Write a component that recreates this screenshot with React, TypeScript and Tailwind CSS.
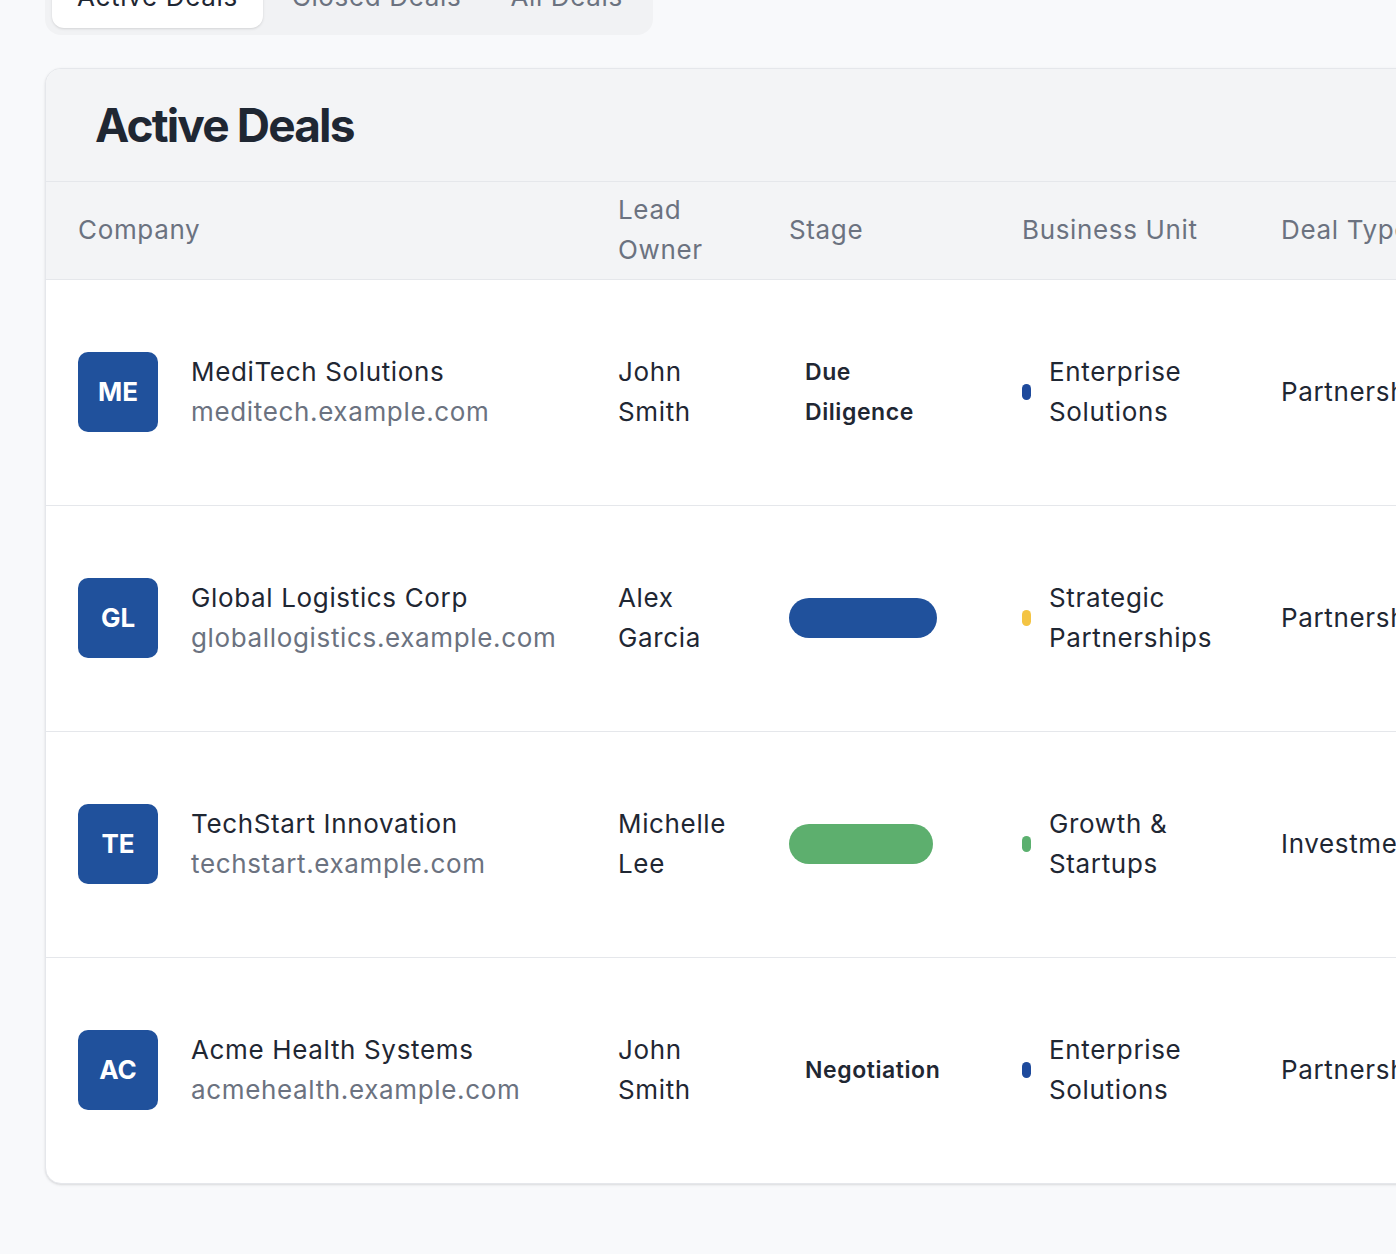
import React from "react";

type Deal = {
  initials: string;
  name: string;
  domain: string;
  owner: string;
  stage: string;
  stageStyle: "plain" | "blue" | "green";
  unit: string;
  dot: string;
  dealType: string;
};

const deals: Deal[] = [
  {
    initials: "ME",
    name: "MediTech Solutions",
    domain: "meditech.example.com",
    owner: "John Smith",
    stage: "Due Diligence",
    stageStyle: "plain",
    unit: "Enterprise Solutions",
    dot: "bg-[#1e4a9c]",
    dealType: "Partnership",
  },
  {
    initials: "GL",
    name: "Global Logistics Corp",
    domain: "globallogistics.example.com",
    owner: "Alex Garcia",
    stage: "Proposal",
    stageStyle: "blue",
    unit: "Strategic Partnerships",
    dot: "bg-[#f4c443]",
    dealType: "Partnership",
  },
  {
    initials: "TE",
    name: "TechStart Innovation",
    domain: "techstart.example.com",
    owner: "Michelle Lee",
    stage: "Discovery",
    stageStyle: "green",
    unit: "Growth & Startups",
    dot: "bg-[#5bb06f]",
    dealType: "Investment",
  },
  {
    initials: "AC",
    name: "Acme Health Systems",
    domain: "acmehealth.example.com",
    owner: "John Smith",
    stage: "Negotiation",
    stageStyle: "plain",
    unit: "Enterprise Solutions",
    dot: "bg-[#1e4a9c]",
    dealType: "Partnership",
  },
];

const StageBadge = ({ deal }: { deal: Deal }) => {
  if (deal.stageStyle === "blue")
    return (
      <span className="block w-[148px] overflow-hidden whitespace-nowrap rounded-full bg-[#20519c] px-4 text-[23px] font-semibold leading-[40px] text-[#20519c]">
        {deal.stage}
      </span>
    );
  if (deal.stageStyle === "green")
    return (
      <span className="block w-[144px] overflow-hidden whitespace-nowrap rounded-full bg-[#5daf6e] px-4 text-[23px] font-semibold leading-[40px] text-[#5daf6e]">
        {deal.stage}
      </span>
    );
  return (
    <span className="block max-w-[160px] px-4 text-[23px] font-semibold leading-[40px] tracking-[0.025em] text-[#1f2733]">
      {deal.stage}
    </span>
  );
};

export default function App() {
  return (
    <div className="min-h-[1254px] overflow-hidden bg-[#f8f9fb] font-['Inter',sans-serif] text-[#1f2733]">
      <div className="ml-[45px] mt-[-41px] flex w-[608px] gap-1 rounded-2xl bg-[#f1f2f4] p-[7px] text-[26px] leading-[40px] tracking-[0.025em]">
        <div className="rounded-xl bg-white px-[25px] py-[11px] shadow-sm">Active Deals</div>
        <div className="px-[25px] py-[11px] text-[#6b7280]">Closed Deals</div>
        <div className="px-[20px] py-[11px] text-[#6b7280]">All Deals</div>
      </div>

      <div className="ml-[45px] mt-[33px] w-[1500px] overflow-hidden rounded-2xl border border-[#e5e7eb] bg-white shadow-sm">
        <div className="flex h-[113px] items-center border-b border-[#e5e7eb] bg-[#f3f4f6] px-[49px]">
          <h2 className="text-[46px] font-bold tracking-[-0.04em] text-[#1f2733]">Active Deals</h2>
        </div>
        <table className="w-full table-fixed border-collapse text-[26px] leading-[40px] tracking-[0.025em]">
          <colgroup>
            <col className="w-[540px]" />
            <col className="w-[171px]" />
            <col className="w-[233px]" />
            <col className="w-[259px]" />
            <col />
          </colgroup>
          <thead>
            <tr className="h-[97px] border-b border-[#e5e7eb] bg-[#f3f4f6] text-left text-[#6b7280]">
              <th className="pl-[32px] font-normal">Company</th>
              <th className="pl-[32px] pr-4 font-normal">Lead Owner</th>
              <th className="pl-[32px] font-normal">Stage</th>
              <th className="pl-[32px] font-normal">Business Unit</th>
              <th className="pl-[32px] font-normal whitespace-nowrap">Deal Type</th>
            </tr>
          </thead>
          <tbody>
            {deals.map((deal, i) => (
              <tr
                key={deal.initials}
                className={`h-[226px] ${i < deals.length - 1 ? "border-b border-[#e5e7eb]" : ""}`}
              >
                <td className="pl-[32px]">
                  <div className="flex items-center gap-[33px]">
                    <div className="flex h-20 w-20 shrink-0 items-center justify-center rounded-[10px] bg-[#20519c] text-[26px] font-bold tracking-normal text-white">
                      {deal.initials}
                    </div>
                    <div>
                      <div className="text-[#1f2733]">{deal.name}</div>
                      <div className="text-[#6b7280]">{deal.domain}</div>
                    </div>
                  </div>
                </td>
                <td className="pl-[32px] pr-4">{deal.owner}</td>
                <td className="pl-[32px]">
                  <StageBadge deal={deal} />
                </td>
                <td className="pl-[32px] pr-4">
                  <div className="flex items-center gap-[18px]">
                    <span className={`h-4 w-[9px] shrink-0 rounded-full ${deal.dot}`} />
                    <span>{deal.unit}</span>
                  </div>
                </td>
                <td className="pl-[32px] whitespace-nowrap">{deal.dealType}</td>
              </tr>
            ))}
          </tbody>
        </table>
      </div>
    </div>
  );
}
